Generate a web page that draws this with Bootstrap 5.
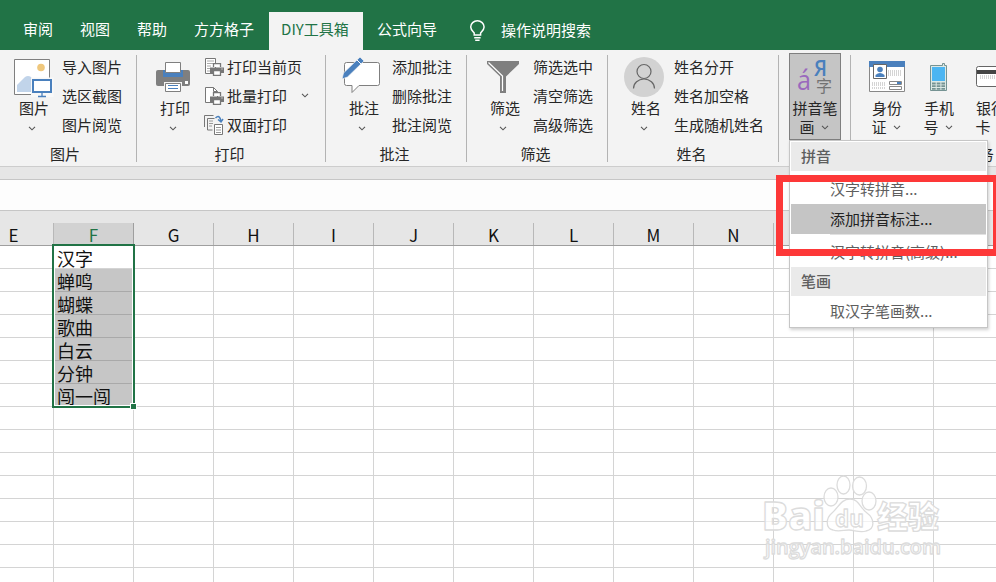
<!DOCTYPE html>
<html lang="zh-CN">
<head>
<meta charset="utf-8">
<title>DIY工具箱</title>
<link rel="stylesheet" href="https://cdn.jsdelivr.net/npm/bootstrap@5.3.0/dist/css/bootstrap.min.css">
<style>
body{width:996px;height:582px;overflow:hidden;font:15px/20px "Noto Sans","Noto Sans CJK SC",sans-serif;color:#262626;background:#fff}
body *{white-space:nowrap}
.cjk,.grp,.pop{font-family:"Noto Sans CJK SC",sans-serif}
.tabs{height:50px;background:#217346;color:#fff;padding:12px 0 0 11px}
.tabs .tab{padding:0 12px;height:38px;line-height:34px;margin-right:3px}
.tabs .wide{margin-right:3px}
.tabs .on{background:#f3f3f3;color:#217346;width:94px;margin-right:2px}
.tabs .bulb{margin:8px 15px 0 17px}
.tabs .ask{line-height:35px}
.ribbon{height:117px;background:#f3f3f3;border-bottom:1px solid #cdcdcd;padding-top:3px}
.grp{height:107px;margin-top:2px;flex:none}
.grp.sep{border-right:1px solid #b3b3b3}
.g-pic{width:137px}.g-print{width:189px}.g-note,.g-filter{width:141px}.g-name{width:171px}.g-py{width:72px}
.big{width:52px;margin-left:12px;height:88px}
.g-pic .big{margin-left:8px}
.big svg.ico{height:42px;width:52px;display:block;flex:none;overflow:visible}
.big .cap{line-height:21px}
.big .chev{margin:8px 4px 0 0}
.chev{width:8px;height:5px;flex:none}
.smalls{margin:-3px 0 0 2px}
.g-print .smalls{margin-left:3px}
.smalls .it{height:29px;line-height:29px}
.smalls .ic{width:20px;height:20px;margin-right:3px}
.smalls .chev{margin-left:14px}
.lbl{height:22px;line-height:22px;text-align:center;padding-right:3px}
.g-pic .lbl{padding-right:6px}
.on-btn{background:#c5c5c5;border:1px solid #7f7f7f;width:52px;height:87px;margin:-2px 0 0 10px}
.two .cap{line-height:19px;text-align:center}
.two .chev{margin:1px 2px 0 6px}
.strip{height:13px;background:#e6e6e6;border-bottom:1px solid #c6c6c6}
.fbar{height:31px;background:#fdfdfd;border-bottom:1px solid #c6c6c6}
.sheet{margin-left:-26px;width:1040px}
.heads{height:35px;background:#e6e6e6;border-bottom:1px solid #9f9f9f;padding-top:12px;color:#111;font:17px/24px "Noto Sans CJK SC",sans-serif}
.heads div{width:80px;height:22px;text-align:center;border-right:1px solid #b8b8b8;flex:none}
.heads .sel{background:#d2d2d2;color:#217346;border-color:#9f9f9f}
.rowx{height:23px}
.rowx div{width:80px;height:23px;border-right:1px solid #d4d4d4;border-bottom:1px solid #d4d4d4;flex:none;font:18px/24px "Noto Sans CJK SC",sans-serif;color:#111;padding-left:3px}
.rowx .pick{background:#c6c6c6;border-bottom-color:#a9a9a9}
.selbox{position:absolute;left:52px;top:244px;width:83px;height:164px;border:2px solid #217346;box-shadow:inset 0 0 0 1px #fff}
.handle{position:absolute;left:130px;top:403px;width:7px;height:7px;background:#217346;border:1px solid #fff}
.pop{position:absolute;left:789px;top:140px;width:199px;height:188px;background:#fff;border:1px solid #c6c6c6;padding:1px;color:#5e5e5e;box-shadow:1px 2px 3px rgba(0,0,0,.18)}
.pop .hd{background:#eaeaea;height:29px;line-height:28px;padding-left:10px;font-weight:500}
.pop .mi{padding-left:39px}
.m1{height:33px;line-height:36px}.m2{height:30px;line-height:30px;background:#c5c5c5;color:#222}.m3{height:32px;line-height:34px}.m4{height:30px;line-height:29px}
.pop .rule{margin-left:39px;height:1px;background:#e1e1e1}
.redbox{position:absolute;left:776px;top:175px;width:224px;height:81px;border:7px solid #fd3838}
.wm{position:absolute;left:756px;top:470px}
</style>
<script src="https://cdn.jsdelivr.net/npm/bootstrap@5.3.0/dist/js/bootstrap.bundle.min.js"></script>
</head>
<body class="position-relative">
<svg width="0" height="0" class="position-absolute"><defs>
<symbol id="cv" viewBox="0 0 8 5"><path d="M1 .8 4 3.8 7 .8" fill="none" stroke="#555" stroke-width="1.1"/></symbol>
<symbol id="pr" viewBox="0 0 14 13"><path d="M3.500 4V.7h7V4" fill="#fff" stroke="#777" stroke-width="1.300"/><path d="M0 4.500h14V10H0z" fill="#777"/><path d="M3.500 7.500h7v4.800h-7z" fill="#fff" stroke="#777" stroke-width="1.300"/><path d="M11.500 6h1" stroke="#fff"/></symbol>
</defs></svg>
<nav class="tabs d-flex cjk">
<div class="tab">审阅</div><div class="tab">视图</div><div class="tab">帮助</div><div class="tab wide">方方格子</div><div class="tab on">DIY工具箱</div><div class="tab">公式向导</div>
<svg class="bulb" width="17" height="22" viewBox="0 0 17 22" fill="none" stroke="#fff" stroke-width="1.500"><path d="M5.200 15v-2C3.500 11 1.700 9.500 1.700 7a6.700 6.200 0 0 1 13.400 0c0 2.500-1.800 4-3.500 6v2zM5.200 17.700h6.400M6.200 20.200h4.400"/></svg>
<div class="ask">操作说明搜索</div>
</nav>
<div class="ribbon d-flex">
 <div class="grp sep g-pic"><div class="d-flex"><div class="big d-flex flex-column align-items-center">
 <svg class="ico" viewBox="0 0 52 42"><path d="M6.500 4.500h35v35h-35z" fill="#fff" stroke="#7f7f7f"/><circle cx="33" cy="12.500" r="3.800" fill="#efc77c"/><path d="M9 37V30l8-8q3-2 6 0l2 3v12z" fill="#c1d4ea"/><path d="M23 22.500h22.500V42H23z" fill="#f8f8f8"/><path d="M25 25h18v12H25z" fill="#fff" stroke="#4a80bd" stroke-width="2"/><path d="M34 37v4M30 41.500h8" stroke="#4a80bd" stroke-width="1.300"/></svg>
 <div class="cap">图片</div><svg class="chev"><use href="#cv"/></svg></div>
 <div class="smalls"><div class="it">导入图片</div><div class="it">选区截图</div><div class="it">图片阅览</div></div></div><div class="lbl">图片</div></div>

 <div class="grp sep g-print"><div class="d-flex"><div class="big d-flex flex-column align-items-center">
 <svg class="ico" viewBox="0 0 52 42"><rect x="7" y="15" width="34" height="16" rx="2" fill="#7f7f7f"/><path d="M14 15h20v7H14z" fill="#4a80bd"/><path d="M16.500 7.500h15v10h-15z" fill="#fff" stroke="#7f7f7f"/><path d="M36 26h3v3h-3z" fill="#fff"/><path d="M15 27h18v4H15z" fill="#f3f3f3"/><path d="M16.500 28.500h15v8h-15z" fill="#fff" stroke="#7f7f7f"/><path d="M19 30.500h10M19 33.500h10" stroke="#4a80bd"/></svg>
 <div class="cap">打印</div><svg class="chev"><use href="#cv"/></svg></div>
 <div class="smalls">
 <div class="it d-flex align-items-center"><svg class="ic"><path d="M1.500 1.500h10v15h-10z" fill="#fff" stroke="#777"/><path d="M3 4h7M3 6.500h7M3 9h4M3 11.500h3M3 14h3" stroke="#aaa"/><use href="#pr" x="6" y="6" width="14" height="13"/></svg>打印当前页</div>
 <div class="it d-flex align-items-center"><svg class="ic"><path d="M1.500 1.500h8l4 4v11h-12z" fill="#fff" stroke="#777"/><path d="M9.500 1.500v4h4" fill="none" stroke="#777"/><use href="#pr" x="6" y="6" width="14" height="13"/></svg>批量打印<svg class="chev"><use href="#cv"/></svg></div>
 <div class="it d-flex align-items-center"><svg class="ic"><path d="M.5 12V.5h9M8.500 15h-5V3.500h7" fill="none" stroke="#777"/><path d="M5 6h4M5 8.500h4M5 11h3" stroke="#999"/><path d="M11.500 3q4-4 5.500 3m-3-1.500 3 2.500 2-3" fill="none" stroke="#4a80bd" stroke-width="1.500"/><path d="M10.500 9.500h8v10h-8z" fill="#fff" stroke="#777"/><path d="M12 12.500h5M12 15h5M12 17.500h5" stroke="#999"/></svg>双面打印</div>
 </div></div><div class="lbl">打印</div></div>

 <div class="grp sep g-note"><div class="d-flex"><div class="big d-flex flex-column align-items-center">
 <svg class="ico" viewBox="0 0 52 42"><path d="M8.500 7.500h31q2 0 2 2v19q0 2-2 2H21l-7 7v-7H8.500q-2 0-2-2v-19q0-2 2-2z" fill="#fff" stroke="#7f7f7f"/><path d="m4 24 1.500-6L22 2l4 4L9.500 22z" fill="#4a80bd" stroke="#f3f3f3" stroke-width=".7"/><path d="m19 5 4 4" stroke="#fff"/></svg>
 <div class="cap">批注</div><svg class="chev"><use href="#cv"/></svg></div>
 <div class="smalls"><div class="it">添加批注</div><div class="it">删除批注</div><div class="it">批注阅览</div></div></div><div class="lbl">批注</div></div>

 <div class="grp sep g-filter"><div class="d-flex"><div class="big d-flex flex-column align-items-center">
 <svg class="ico" viewBox="0 0 52 42"><path d="M8 6h32v3L27 21.500V38h-6V21.500L8 9z" fill="#7f7f7f"/><path d="M9.500 7.500 23.500 21V36" fill="none" stroke="#fff" stroke-width="1.200"/></svg>
 <div class="cap">筛选</div><svg class="chev"><use href="#cv"/></svg></div>
 <div class="smalls"><div class="it">筛选选中</div><div class="it">清空筛选</div><div class="it">高级筛选</div></div></div><div class="lbl">筛选</div></div>

 <div class="grp sep g-name"><div class="d-flex"><div class="big d-flex flex-column align-items-center">
 <svg class="ico" viewBox="0 0 52 42"><circle cx="24" cy="22" r="20" fill="#d2d2d2"/><circle cx="24" cy="16.500" r="7" fill="none" stroke="#666" stroke-width="1.200"/><path d="M13.500 33.500a10.500 9.500 0 0 1 21 0" fill="none" stroke="#666" stroke-width="1.200"/></svg>
 <div class="cap">姓名</div><svg class="chev"><use href="#cv"/></svg></div>
 <div class="smalls"><div class="it">姓名分开</div><div class="it">姓名加空格</div><div class="it">生成随机姓名</div></div></div><div class="lbl">姓名</div></div>

 <div class="grp sep g-py"><div class="on-btn two">
 <svg width="50" height="44" class="d-block"><text x="7" y="36" font-family="Open Sans" font-size="28" fill="#9a69bd" textLength="14" lengthAdjust="spacingAndGlyphs">á</text><text x="24" y="22" font-family="Open Sans" font-weight="600" font-size="22" fill="#4a80bd" textLength="13" lengthAdjust="spacingAndGlyphs">Я</text><text x="26" y="38" font-size="16" fill="#737373">字</text></svg>
 <div class="cap">拼音笔</div><div class="cap d-flex justify-content-center align-items-center">画<svg class="chev"><use href="#cv"/></svg></div></div></div>

 <div class="grp flex-fill"><div class="d-flex two" style="margin-left:10px">
 <div style="width:52px"><svg width="52" height="43" class="d-block"><path d="M8.500 6.500h35v30h-35z" fill="#fff" stroke="#888"/><path d="M8 6h36v6H8z" fill="#4a80bd"/><path d="M12.500 9.500h13v14h-13z" fill="#fff" stroke="#666"/><circle cx="19" cy="14.500" r="2.800" fill="#4a80bd"/><path d="M14.500 22v-2q4.500-4 9 0v2z" fill="#4a80bd"/><path d="M27 16h14M27 18h14M27 20h14M11 28h14M11 30h14M11 33h14" stroke="#aaa" stroke-dasharray="1 1"/><path d="M28.500 26.500h12v3h-12zM28.500 31.500h12v3h-12z" fill="#fff" stroke="#888"/><path d="M36 27h4v2h-4z" fill="#4a80bd"/></svg>
 <div class="cap">身份</div><div class="cap d-flex justify-content-center align-items-center">证<svg class="chev"><use href="#cv"/></svg></div></div>
 <div style="width:52px"><svg width="52" height="43" class="d-block"><path d="M17.500 10.500h12v-2h2v2h2v25h-16z" fill="#dce8e5" stroke="#759393"/><path d="M19 12h13v14H19z" fill="#4bb5f2"/><path d="M19 28.500h13M19 31.200h13M19 33.900h13" stroke="#759393" stroke-width="1.800" stroke-dasharray="3.700 1"/></svg>
 <div class="cap">手机</div><div class="cap d-flex justify-content-center align-items-center">号<svg class="chev"><use href="#cv"/></svg></div></div>
 <div style="width:52px"><svg width="52" height="43" class="d-block"><rect x="11.500" y="11.500" width="36" height="20" rx="2" fill="#fff" stroke="#666"/><path d="M12 15h36v4H12z" fill="#444"/><path d="M15 21h30M15 23h30" stroke="#aaa" stroke-dasharray="1 1"/></svg>
 <div class="cap">银行</div><div class="cap d-flex justify-content-center align-items-center">卡<svg class="chev"><use href="#cv"/></svg></div></div>
 </div><div class="lbl text-start" style="padding:7px 0 0 128px">务</div></div>
</div>
<div class="strip"></div><div class="fbar"></div>
<div class="sheet" id="sheet"></div>
<div class="selbox"></div><div class="handle"></div>
<svg class="wm" width="200" height="100" fill="#fff" fill-opacity=".7" stroke="#dcdcdc" stroke-width="1.300" stroke-linejoin="round">
<text x="6" y="60" font-family="Open Sans" font-weight="800" font-size="39" textLength="63" lengthAdjust="spacingAndGlyphs">Bai</text>
<ellipse cx="75" cy="27" rx="7" ry="9"/><ellipse cx="87.500" cy="15" rx="6.500" ry="9"/><ellipse cx="103.500" cy="16" rx="7" ry="9"/><ellipse cx="113" cy="31" rx="7" ry="9"/>
<path d="M94 29c9 0 10 9 17 14s9 16-1 18c-6 2-12-1-17-1s-11 2-16 0c-8-2-7-12-1-17s9-14 18-14z"/>
<text x="79" y="57" font-family="Open Sans" font-weight="700" font-size="24" textLength="29" lengthAdjust="spacingAndGlyphs">du</text>
<text x="121" y="58" font-family="Noto Sans CJK SC" font-weight="900" font-size="31">经验</text>
<text x="9" y="84" font-family="Open Sans" font-weight="600" font-size="20" textLength="176" lengthAdjust="spacingAndGlyphs">jingyan.baidu.com</text></svg>
<div class="pop"><div class="hd">拼音</div><div class="mi m1">汉字转拼音...</div><div class="mi m2">添加拼音标注...</div><div class="rule"></div><div class="mi m3">汉字转拼音(高级)...</div><div class="hd">笔画</div><div class="mi m4">取汉字笔画数...</div></div>
<div class="redbox"></div>
<script>
const cols=[...'EFGHIJKLMNOPQ'],words=['汉字','蝉鸣','蝴蝶','歌曲','白云','分钟','闯一闯'];
let h='<div class="heads d-flex">'+cols.map(c=>`<div class="${c==='F'?'sel':''}">${c}</div>`).join('')+'</div>';
for(let r=0;r<15;r++)h+='<div class="rowx d-flex">'+cols.map(c=>c==='F'&&words[r]?`<div class="${r?'pick':''}">${words[r]}</div>`:'<div></div>').join('')+'</div>';
document.getElementById('sheet').innerHTML=h;
</script>
</body>
</html>
